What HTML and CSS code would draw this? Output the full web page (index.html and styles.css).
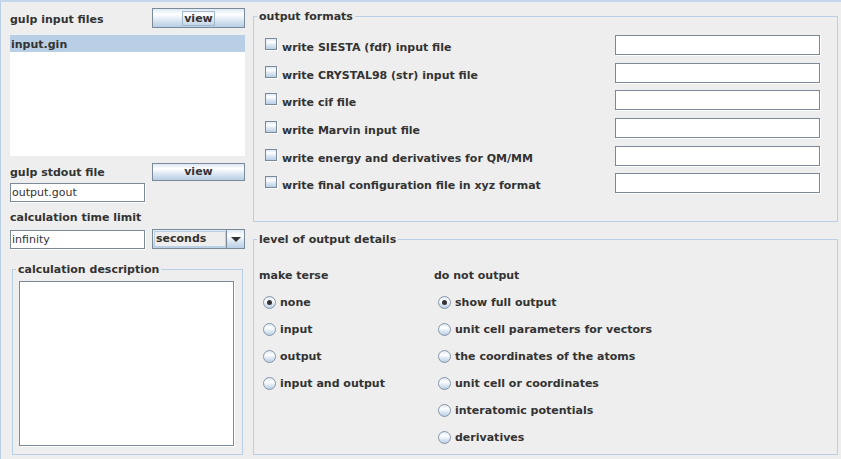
FILE: index.html
```html
<!DOCTYPE html>
<html>
<head>
<meta charset="utf-8">
<link rel="stylesheet" href="styles.css">
</head>
<body>
<div class="frame">
  <div class="left">
    <div class="head-row r1">
      <span class="lbl l1">gulp input files</span>
      <div class="btn b1"><span class="btxt focus">view</span></div>
    </div>
    <div class="list">
      <div class="item sel">input.gin</div>
    </div>
    <div class="head-row r2">
      <span class="lbl l2">gulp stdout file</span>
      <div class="btn b2"><span class="btxt">view</span></div>
    </div>
    <div class="field f1">output.gout</div>
    <div class="lbl l3">calculation time limit</div>
    <div class="time-row">
      <div class="field f2">infinity</div>
      <div class="combo">
        <div class="combo-text">seconds</div>
        <div class="combo-btn"><span class="arrow"></span></div>
      </div>
    </div>
    <fieldset class="group desc">
      <legend>calculation description</legend>
      <div class="textarea"></div>
    </fieldset>
  </div>
  <div class="right">
    <fieldset class="group formats">
      <legend>output formats</legend>
      <div class="fmt-list">
        <div class="fmt-row h28"><span class="check"></span><span class="opt">write SIESTA (fdf) input file</span><span class="field tf"></span></div>
        <div class="fmt-row h27"><span class="check"></span><span class="opt">write CRYSTAL98 (str) input file</span><span class="field tf"></span></div>
        <div class="fmt-row h28"><span class="check"></span><span class="opt">write cif file</span><span class="field tf"></span></div>
        <div class="fmt-row h28"><span class="check"></span><span class="opt">write Marvin input file</span><span class="field tf"></span></div>
        <div class="fmt-row h27"><span class="check"></span><span class="opt">write energy and derivatives for QM/MM</span><span class="field tf"></span></div>
        <div class="fmt-row h28"><span class="check"></span><span class="opt">write final configuration file in xyz format</span><span class="field tf"></span></div>
      </div>
    </fieldset>
    <fieldset class="group details">
      <legend>level of output details</legend>
      <div class="cols">
        <div class="col c-left">
          <div class="col-head">make terse</div>
          <div class="radio-row"><span class="radio on"></span><span class="ropt">none</span></div>
          <div class="radio-row"><span class="radio"></span><span class="ropt">input</span></div>
          <div class="radio-row"><span class="radio"></span><span class="ropt">output</span></div>
          <div class="radio-row"><span class="radio"></span><span class="ropt">input and output</span></div>
        </div>
        <div class="col c-right">
          <div class="col-head">do not output</div>
          <div class="radio-row"><span class="radio on"></span><span class="ropt">show full output</span></div>
          <div class="radio-row"><span class="radio"></span><span class="ropt">unit cell parameters for vectors</span></div>
          <div class="radio-row"><span class="radio"></span><span class="ropt">the coordinates of the atoms</span></div>
          <div class="radio-row"><span class="radio"></span><span class="ropt">unit cell or coordinates</span></div>
          <div class="radio-row"><span class="radio"></span><span class="ropt">interatomic potentials</span></div>
          <div class="radio-row"><span class="radio"></span><span class="ropt">derivatives</span></div>
        </div>
      </div>
    </fieldset>
  </div>
</div>
</body>
</html>
```
FILE: styles.css
```css
* { box-sizing: border-box; }
html, body {
  margin: 0;
  padding: 0;
  background: #eeeeee;
}
body {
  font-family: "DejaVu Sans", "Noto Sans", sans-serif;
  font-size: 11px;
  color: #333333;
}
.frame {
  width: 841px;
  height: 459px;
  border-top: 2px solid #c4d7eb;
  border-left: 1px solid #b8cfe5;
  display: flex;
  overflow: hidden;
}

/* ---------- left column ---------- */
.left {
  width: 252px;
  flex: none;
  padding-left: 9px;
  display: flex;
  flex-direction: column;
}
.lbl {
  font-weight: bold;
  line-height: 13px;
  white-space: nowrap;
}
.head-row {
  display: flex;
  align-items: flex-start;
}
.head-row .lbl { width: 142px; }
.r1 { margin-top: 6px; height: 20px; }
.r1 .lbl { margin-top: 5px; }
.r2 { margin-top: 7px; height: 18px; }
.r2 .lbl { margin-top: 3px; }

.btn {
  width: 93px;
  border: 1px solid #7a8a99;
  background: linear-gradient(#dde8f3 0%, #ffffff 30%, #dde8f3 60%, #b8cfe5 100%);
  display: flex;
  justify-content: center;
  align-items: flex-start;
  font-weight: bold;
}
.b1 { height: 20px; padding-top: 2px; }
.b2 { height: 18px; padding-top: 0px; }
.btxt {
  border: 1px solid transparent;
  line-height: 13px;
  padding: 0 1px;
}
.btxt.focus { border-color: #a3b8cc; }

.list {
  margin-top: 7px;
  width: 235px;
  height: 121px;
  background: #ffffff;
}
.item {
  height: 17px;
  padding: 2px 0 0 1px;
  line-height: 15px;
  font-weight: bold;
}
.item.sel { background: #b8cfe5; }

.field {
  background: #ffffff;
  border: 1px solid #7a8a99;
  box-shadow: 1px 1px 0 #ffffff;
  padding-left: 1px;
  line-height: 17px;
  white-space: nowrap;
}
.f1 { margin-top: 2px; width: 135px; height: 19px; }
.l3 { margin-top: 9px; }
.time-row {
  margin-top: 5px;
  display: flex;
  align-items: flex-start;
}
.f2 { margin-top: 1px; width: 135px; height: 19px; }
.combo {
  margin-left: 7px;
  width: 93px;
  height: 20px;
  border: 1px solid #7a8a99;
  display: flex;
  background: linear-gradient(#dde8f3 0%, #ffffff 30%, #dde8f3 60%, #b8cfe5 100%);
}
.combo-text {
  flex: 1;
  margin: 1px 0 1px 1px;
  border: 1px solid #b8cfe5;
  background: #eeeeee;
  font-weight: bold;
  line-height: 14px;
  padding-left: 1px;
}
.combo-btn {
  width: 18px;
  border-left: 1px solid #7a8a99;
  display: flex;
  justify-content: center;
  align-items: center;
}
.arrow {
  width: 0;
  height: 0;
  border-left: 5px solid transparent;
  border-right: 5px solid transparent;
  border-top: 5px solid #333333;
}

/* ---------- groups ---------- */
.group {
  margin: 0;
  padding: 0;
  border: 1px solid #b8cfe5;
  min-width: 0;
}
.group legend {
  margin-left: 3px;
  padding: 0 2px;
  font-weight: bold;
  line-height: 13px;
  white-space: nowrap;
}
.desc {
  margin-top: 14px;
  margin-left: 2px;
  width: 231px;
  height: 192px;
}
.textarea {
  margin: 5px 0 0 6px;
  width: 215px;
  height: 165px;
  background: #ffffff;
  border: 1px solid #7a8a99;
  box-shadow: 1px 1px 0 #ffffff;
}

/* ---------- right column ---------- */
.right {
  width: 585px;
  flex: none;
  display: flex;
  flex-direction: column;
}
.formats {
  margin-top: 8px;
  height: 212px;
}
.fmt-list {
  padding-top: 12px;
  display: flex;
  flex-direction: column;
}
.fmt-row {
  display: flex;
  align-items: flex-start;
}
.h28 { height: 28px; }
.h27 { height: 27px; }
.check {
  margin: 3px 0 0 11px;
  width: 12px;
  height: 12px;
  border: 1px solid #7a8a99;
  box-shadow: 1px 1px 0 #ffffff;
  background: linear-gradient(#dde8f3 0%, #ffffff 30%, #dde8f3 60%, #b8cfe5 100%);
}
.opt {
  margin: 6px 0 0 5px;
  font-weight: bold;
  line-height: 13px;
  white-space: nowrap;
}
.tf {
  margin-left: auto;
  margin-right: 17px;
  width: 205px;
  height: 20px;
}

.details {
  margin-top: 11px;
  height: 222px;
}
.cols {
  padding: 16px 0 0 4px;
  display: flex;
}
.col { display: flex; flex-direction: column; }
.c-left { width: 176px; }
.col-head {
  font-weight: bold;
  line-height: 27px;
  height: 27px;
  white-space: nowrap;
}
.c-left .col-head { padding-left: 1px; }
.radio-row {
  height: 27px;
  display: flex;
  align-items: center;
}
.radio {
  margin-left: 4px;
  width: 13px;
  height: 13px;
  border-radius: 50%;
  border: 1px solid #8595a6;
  background: linear-gradient(#dde8f3 0%, #ffffff 35%, #dde8f3 65%, #b8cfe5 100%);
  display: flex;
  align-items: center;
  justify-content: center;
}
.c-left .radio { margin-left: 5px; }
.radio.on::after {
  content: "";
  width: 5px;
  height: 5px;
  border-radius: 50%;
  background: #333333;
}
.ropt {
  margin-left: 4px;
  font-weight: bold;
  line-height: 13px;
  white-space: nowrap;
}
```
